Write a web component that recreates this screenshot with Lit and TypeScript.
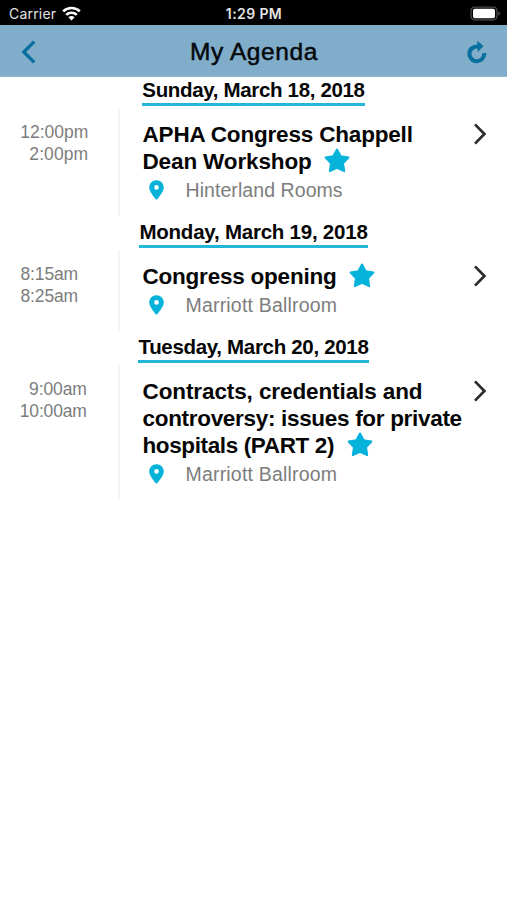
import { LitElement, html, css, svg } from "lit";
import { customElement, property } from "lit/decorators.js";
import { styleMap } from "lit/directives/style-map.js";

interface Line {
  text: string;
  tracking: number;
}

interface Session {
  times: Line[];
  align: "start" | "end";
  timesWidth: number;
  title: Line[];
  room: Line;
}

interface Day {
  date: Line;
  sessions: Session[];
}

const agenda: Day[] = [
  {
    date: { text: "Sunday, March 18, 2018", tracking: -0.34 },
    sessions: [
      {
        times: [{ text: "12:00pm", tracking: 0 }, { text: "2:00pm", tracking: 0.1 }],
        align: "end",
        timesWidth: 88.3,
        title: [
          { text: "APHA Congress Chappell", tracking: -0.18 },
          { text: "Dean Workshop", tracking: -0.13 },
        ],
        room: { text: "Hinterland Rooms", tracking: 0.07 },
      },
    ],
  },
  {
    date: { text: "Monday, March 19, 2018", tracking: -0.23 },
    sessions: [
      {
        times: [{ text: "8:15am", tracking: -0.15 }, { text: "8:25am", tracking: -0.15 }],
        align: "start",
        timesWidth: 88,
        title: [{ text: "Congress opening", tracking: -0.22 }],
        room: { text: "Marriott Ballroom", tracking: 0.19 },
      },
    ],
  },
  {
    date: { text: "Tuesday, March 20, 2018", tracking: -0.32 },
    sessions: [
      {
        times: [{ text: "9:00am", tracking: -0.1 }, { text: "10:00am", tracking: -0.15 }],
        align: "end",
        timesWidth: 86.8,
        title: [
          { text: "Contracts, credentials and", tracking: -0.1 },
          { text: "controversy: issues for private", tracking: -0.31 },
          { text: "hospitals (PART 2)", tracking: -0.38 },
        ],
        room: { text: "Marriott Ballroom", tracking: 0.19 },
      },
    ],
  },
];

const spaced = (line: Line) => html`<span
  style=${styleMap({ letterSpacing: `${line.tracking}px` })}>${line.text}</span>`;

const star = html`<svg class="star" viewBox="0 0 26 25">${svg`
  <path d="M13 1.5 L16.7 8.2 L24.4 9.5 L19 15.2 L20.2 23.2 L13 19.9 L5.8 23.2 L7 15.2 L1.6 9.5 L9.3 8.2 Z"
    fill="#05b3da" stroke="#05b3da" stroke-width="2" stroke-linejoin="round"/>`}</svg>`;

const pin = html`<svg class="pin" viewBox="0 0 15 20">${svg`
  <path fill-rule="evenodd" fill="#05b3da"
    d="M7.5 .2C3.4.2.2 3.4.2 7.4C.2 12.4 7.5 19.8 7.5 19.8S14.8 12.4 14.8 7.4C14.8 3.4 11.6.2 7.5.2Z
       M7.5 5.1A2.3 2.3 0 1 1 7.5 9.7A2.3 2.3 0 1 1 7.5 5.1Z"/>`}</svg>`;

@customElement("status-bar")
class StatusBar extends LitElement {
  static styles = css`
    :host {
      display: grid;
      grid-template-columns: 1fr auto 1fr;
      align-items: center;
      height: 25px;
      padding: 2px 6px 0 9px;
      box-sizing: border-box;
      background: #000;
      color: #e4e4e4;
      font: 14px/20px Inter, "Liberation Sans", sans-serif;
    }
    .carrier { display: flex; align-items: center; gap: 6px; letter-spacing: 0.2px; }
    .time { font-size: 14px; font-weight: 600; letter-spacing: 0.4px; margin-right: 2px; }
    .wifi { width: 19px; height: 15px; margin-top: -1px; }
    .battery { width: 31px; height: 15px; justify-self: end; }
  `;

  render() {
    return html`
      <div class="carrier">
        <span>Carrier</span>
        <svg class="wifi" viewBox="0 0 19 15">
          <g fill="none" stroke="#fff" stroke-width="2.6">
            <path d="M1.2 5.4C5.8 .9 13.2 .9 17.8 5.4" />
            <path d="M4.2 8.9C7.1 6.1 11.9 6.1 14.8 8.9" />
          </g>
          <path d="M9.5 14.4L6.4 11.3C8.1 9.7 10.9 9.7 12.6 11.3Z" fill="#fff" />
        </svg>
      </div>
      <div class="time">1:29 PM</div>
      <svg class="battery" viewBox="0 0 31 15">
        <rect x="1" y="1.2" width="26" height="12.6" rx="3.6" fill="none" stroke="#4c4c4c" stroke-width="1.3" />
        <rect x="3" y="2.7" width="22" height="9.6" rx="1.8" fill="#fff" />
        <path d="M28.4 5.2L30.4 7.5L28.4 9.8Z" fill="#5a5a5a" />
      </svg>
    `;
  }
}

@customElement("nav-header")
class NavHeader extends LitElement {
  static styles = css`
    :host {
      display: grid;
      grid-template-columns: 1fr auto 1fr;
      align-items: center;
      height: 52px;
      padding: 0 20px 0 21px;
      box-sizing: border-box;
      background: #7fadca;
      border-bottom: 1px solid #92b8cf;
    }
    .title {
      font-size: 24.5px;
      line-height: 30px;
      letter-spacing: 0.6px;
      margin-top: 2px;
      color: #05090c;
      -webkit-text-stroke: 0.5px #05090c;
    }
    .back { width: 15px; height: 24px; margin-top: 2px; }
    .refresh { width: 20px; height: 24px; justify-self: end; margin-top: 3px; }
  `;

  render() {
    return html`
      <svg class="back" viewBox="0 0 15 24">
        <path d="M13.2 1.7L2.8 12L13.2 22.3" fill="none" stroke="#08709e" stroke-width="3.3" />
      </svg>
      <div class="title">My Agenda</div>
      <svg class="refresh" viewBox="0 0 20 24">
        <path d="M17.2 13.2A7.4 7.4 0 1 1 11.5 6.6" fill="none" stroke="#08709e" stroke-width="4" />
        <path d="M10.2 .8L16.6 6.1L10.8 12Z" fill="#08709e" />
      </svg>
    `;
  }
}

@customElement("agenda-session")
class AgendaSession extends LitElement {
  @property({ attribute: false }) session!: Session;

  static styles = css`
    :host { display: flex; white-space: nowrap; }
    .times {
      display: flex;
      flex-direction: column;
      width: 118px;
      flex: none;
      padding-top: 12.4px;
      box-sizing: border-box;
      font-size: 17.5px;
      line-height: 22px;
      color: #7d7d7d;
    }
    .range { display: flex; flex-direction: column; padding-left: 20.5px; box-sizing: border-box; }
    .start { align-items: flex-start; }
    .end { align-items: flex-end; }
    .details {
      flex: 1;
      padding: 12.4px 0 12.3px 22.5px;
      border-left: 2px solid #f5f5f5;
    }
    .title { font-size: 22.5px; line-height: 27px; font-weight: 700; color: #060606; }
    .line { display: flex; height: 27px; }
    .star { width: 26px; height: 25px; margin-left: 12.5px; margin-top: 0; }
    .room {
      display: flex;
      align-items: center;
      gap: 22px;
      margin-top: 2px;
      padding-left: 6px;
      font-size: 19.5px;
      line-height: 27px;
      color: #7d7d7d;
    }
    .pin { width: 15px; height: 20px; margin-top: -1px; }
    .chevron { flex: none; width: 14px; height: 24px; margin: 13.7px 20px 0 0; }
  `;

  render() {
    const { times, align, timesWidth, title, room } = this.session;
    return html`
      <div class="times">
        <div class="range ${align}" style=${styleMap({ width: `${timesWidth}px` })}>${times.map(spaced)}</div>
      </div>
      <div class="details">
        <div class="title">
          ${title.map((line, i) => html`<div class="line">${spaced(line)}${i === title.length - 1 ? star : ""}</div>`)}
        </div>
        <div class="room">${pin}${spaced(room)}</div>
      </div>
      <svg class="chevron" viewBox="0 0 14 24">
        <path d="M2 2.4L11.4 12L2 21.6" fill="none" stroke="#2b2b2b" stroke-width="2.7" />
      </svg>
    `;
  }
}

@customElement("app-root")
class AppRoot extends LitElement {
  static styles = css`
    :host {
      display: block;
      height: 900px;
      overflow: hidden;
      background: #fff;
      font-family: "Liberation Sans", Arial, sans-serif;
    }
    .agenda { margin-top: -3.1px; }
    nav-header { position: relative; }
    .heading { display: flex; justify-content: center; height: 34.4px; padding: 4.4px 0 2px; box-sizing: border-box; }
    .date {
      font-size: 20.5px;
      line-height: 24.6px;
      height: 28px;
      box-sizing: border-box;
      font-weight: 700;
      color: #060606;
      border-bottom: 3px solid #22b6d9;
      white-space: nowrap;
    }
  `;

  render() {
    return html`
      <status-bar></status-bar>
      <nav-header></nav-header>
      <main class="agenda">
        ${agenda.map(
          (day) => html`
            <section>
              <div class="heading"><div class="date">${spaced(day.date)}</div></div>
              ${day.sessions.map((s) => html`<agenda-session .session=${s}></agenda-session>`)}
            </section>
          `,
        )}
      </main>
    `;
  }
}
